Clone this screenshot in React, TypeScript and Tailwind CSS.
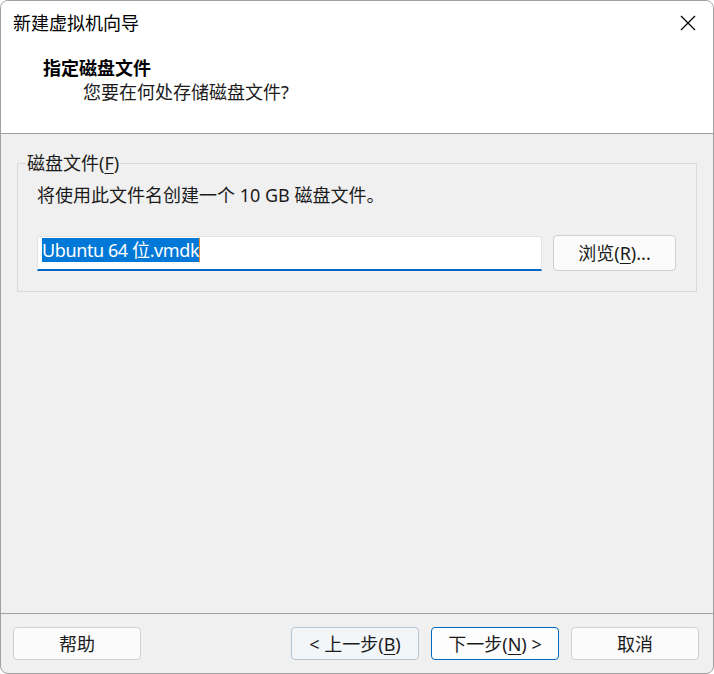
import React from 'react';

const FONT = { fontFamily: '"Noto Sans", "Noto Sans CJK SC", sans-serif' };

interface DlgButtonProps {
  children: React.ReactNode;
  variant?: 'normal' | 'default' | 'hover';
}

function DlgButton({ children, variant = 'normal' }: DlgButtonProps) {
  const tone =
    variant === 'default'
      ? 'border-[#0067c0] bg-[#fdfdfd]'
      : variant === 'hover'
        ? 'border-[#b7c4d1] bg-[#f3f6f9]'
        : 'border-[#d0d0d0] bg-[#fbfbfb]';
  return (
    <button
      type="button"
      className={`w-[128px] h-[33px] rounded-[4px] border text-[18px] leading-[24px] text-[#1b1b1b] flex items-center justify-center ${tone}`}
    >
      {children}
    </button>
  );
}

function Mnemonic({ k }: { k: string }) {
  return (
    <>
      (<span className="underline underline-offset-[3px] decoration-1">{k}</span>)
    </>
  );
}

export default function App() {
  return (
    <div className="w-[714px] h-[674px] bg-white" style={FONT}>
      <div className="w-full h-full flex flex-col border border-[#a0a0a0] rounded-[8px] overflow-hidden bg-[#f0f0f0]">
        {/* Title bar */}
        <div className="h-[44px] bg-white flex items-center justify-between pl-[12px] pr-[17px]">
          <span className="text-[18px] leading-[24px] text-black">新建虚拟机向导</span>
          <svg width="16" height="16" viewBox="0 0 16 16" className="text-black">
            <path d="M1 1 L15 15 M15 1 L1 15" stroke="currentColor" strokeWidth="1.3" fill="none" />
          </svg>
        </div>

        {/* Header */}
        <div className="h-[89px] bg-white border-b border-[#a0a0a0] pt-[11px]">
          <div className="pl-[42px] text-[18px] leading-[24px] font-bold text-black">指定磁盘文件</div>
          <div className="pl-[82px] text-[18px] leading-[24px] text-[#1b1b1b]">您要在何处存储磁盘文件?</div>
        </div>

        {/* Body */}
        <div className="flex-1 px-[16px] pt-[17px]">
          <fieldset className="border border-[#dadada] pl-[8px] pr-[20px] pb-[20px]">
            <legend className="px-[1px] text-[18px] leading-[24px] text-[#1b1b1b]">
              磁盘文件<Mnemonic k="F" />
            </legend>
            <div className="pl-[11px] pt-[8px]">
              <div className="text-[18px] leading-[24px] text-[#1b1b1b]">
                将使用此文件名创建一个 10 GB 磁盘文件。
              </div>
              <div className="mt-[28px] flex items-center gap-[11px]">
                <div className="w-[505px] h-[35px] bg-white border border-[#e3e3e3] border-b-2 border-b-[#0067c0] rounded-t-[3px] flex items-start pt-[1px] pl-[4px]">
                  <span className="bg-[#0078d7] text-white text-[18px] leading-[24px] tracking-[-0.4px] border-r border-[#f08c30]">
                    Ubuntu 64 位.vmdk
                  </span>
                </div>
                <button
                  type="button"
                  className="w-[123px] h-[36px] rounded-[4px] border border-[#d0d0d0] bg-[#fbfbfb] text-[18px] leading-[24px] text-[#1b1b1b] flex items-center justify-center"
                >
                  浏览<Mnemonic k="R" />...
                </button>
              </div>
            </div>
          </fieldset>
        </div>

        {/* Footer */}
        <div className="border-t border-[#a0a0a0] pt-[13px] pb-[13px] pl-[12px] pr-[14px] flex items-center">
          <DlgButton>帮助</DlgButton>
          <div className="flex-1" />
          <div className="flex gap-[12px]">
            <DlgButton variant="hover">
              &lt; 上一步<Mnemonic k="B" />
            </DlgButton>
            <DlgButton variant="default">
              下一步<Mnemonic k="N" /> &gt;
            </DlgButton>
            <DlgButton>取消</DlgButton>
          </div>
        </div>
      </div>
    </div>
  );
}
